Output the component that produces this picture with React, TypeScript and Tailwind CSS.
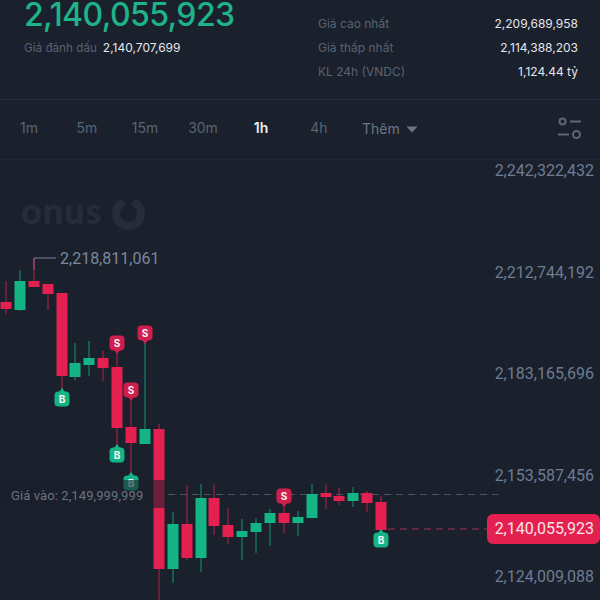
const UI_FONT = "font-['Inter','Liberation_Sans',sans-serif]";

const TIMEFRAMES = ["1m", "5m", "15m", "30m", "1h", "4h"];
const STATS = [
  { label: "Giá cao nhất", value: "2,209,689,958" },
  { label: "Giá thấp nhất", value: "2,114,388,203" },
  { label: "KL 24h (VNDC)", value: "1,124.44 tỷ" },
];
const AXIS = ["2,242,322,432", "2,212,744,192", "2,183,165,696", "2,153,587,456", "2,124,009,088"];

const RED = "#e3204f";
const GREEN = "#14b485";

// x, wick top, wick bottom, body top, body bottom, up
const CANDLES: [number, number, number, number, number, boolean][] = [
  [6, 281, 314, 302, 309, false],
  [20, 270, 311, 281, 310, true],
  [34, 258, 287, 281, 287, false],
  [48, 284, 310, 284, 294, false],
  [62, 293, 392, 293, 376, false],
  [75, 343, 380, 363, 377, true],
  [89, 341, 376, 358, 365, true],
  [103, 351, 381, 358, 368, false],
  [117, 348, 448, 367, 428, false],
  [131, 396, 476, 427, 443, false],
  [145, 340, 429, 429, 444, true],
  [159, 424, 600, 429, 569, false],
  [173, 512, 583, 524, 569, true],
  [187, 485, 560, 524, 558, false],
  [201, 484, 572, 498, 558, true],
  [214, 484, 535, 498, 526, false],
  [228, 508, 544, 525, 537, false],
  [242, 519, 560, 531, 537, true],
  [256, 518, 553, 523, 532, true],
  [270, 509, 546, 513, 523, true],
  [284, 503, 533, 513, 523, false],
  [298, 511, 536, 517, 523, true],
  [312, 484, 518, 494, 518, true],
  [326, 484, 509, 493, 497, false],
  [339, 488, 505, 496, 501, false],
  [353, 487, 507, 493, 501, true],
  [367, 491, 512, 493, 503, false],
  [381, 496, 532, 502, 530, false],
];

// x, center y, letter, points up
const MARKERS: [number, number, string, boolean][] = [
  [62, 399, "B", true],
  [117, 343, "S", false],
  [117, 455, "B", true],
  [131, 390, "S", false],
  [131, 483, "B", true],
  [145, 333, "S", false],
  [284, 496, "S", false],
  [381, 540, "B", true],
];

function Marker({ x, y, letter, up }: { x: number; y: number; letter: string; up: boolean }) {
  const fill = letter === "B" ? GREEN : "#d01f4e";
  const tip = up ? y - 11 : y + 11;
  const base = up ? y - 7 : y + 7;
  return (
    <g>
      <path d={`M${x - 3} ${base}L${x} ${tip}L${x + 3} ${base}Z`} fill={fill} />
      <rect x={x - 7.5} y={y - 7.5} width={15} height={15} rx={4} fill={fill} />
      <text x={x} y={y + 3.5} textAnchor="middle" fontSize={10} fontWeight={700} fill="#f4f6f8" fontFamily="Inter, sans-serif">
        {letter}
      </text>
    </g>
  );
}

function ChartDrawing() {
  return (
    <svg className="absolute inset-0 h-full w-full" viewBox="0 160 600 440">
      {[118, 240, 360, 480].map((x) => (
        <line key={x} x1={x} y1={160} x2={x} y2={600} stroke="#1e2432" />
      ))}
      {[178, 279, 381, 482, 584].map((y) => (
        <line key={y} x1={0} y1={y} x2={600} y2={y} stroke="#1d2330" />
      ))}

      {/* watermark */}
      <circle cx={128.5} cy={213.5} r={12.5} fill="none" stroke="#252d3c" strokeWidth={8} />
      <path d="M120 196L128.5 208L137 196Z" fill="#1a202c" />

      <path d="M34 270V258H56" fill="none" stroke="#77849a" strokeWidth={1} />

      <line x1={168} y1={494.5} x2={498} y2={494.5} stroke="#4b5361" strokeDasharray="7 5" />
      <line x1={388} y1={529} x2={488} y2={529} stroke="#a53057" strokeDasharray="7 5" />

      {CANDLES.map(([x, wt, wb, bt, bb, up]) => {
        const color = up ? GREEN : RED;
        return (
          <g key={x}>
            <line x1={x} y1={wt} x2={x} y2={wb} stroke={color} strokeOpacity={0.8} strokeWidth={1} />
            <rect x={x - 5.5} y={bt} width={11} height={bb - bt} fill={color} />
          </g>
        );
      })}

      {MARKERS.map(([x, y, letter, up]) => (
        <Marker key={`${x}-${y}`} x={x} y={y} letter={letter} up={up} />
      ))}

      {/* entry price label dims what sits under it */}
      <rect x={0} y={480} width={166} height={28} fill="#1a202c" fillOpacity={0.6} />
    </svg>
  );
}

export default function App() {
  return (
    <div className={`flex h-[600px] w-[600px] flex-col overflow-hidden bg-[#1a202c] ${UI_FONT}`}>
      <header className="flex h-[100px] shrink-0 justify-between border-b border-[#262e3e]">
        <div className="pl-6">
          <div className="text-[32px] leading-[30px] font-medium tracking-[-0.6px] text-[#1eb389]">2,140,055,923</div>
          <div className="mt-[8px] flex items-center gap-[6px] text-xs leading-5">
            <span className="text-[11.7px] text-[#596373]">Giá đánh dấu</span>
            <span className="text-[#e3e6ea]">2,140,707,699</span>
          </div>
        </div>
        <div className="mt-[14px] flex w-[282px] flex-col gap-1 pr-[22px] pb-2 text-xs leading-5">
          {STATS.map((s) => (
            <div key={s.label} className="flex justify-between">
              <span className="text-[#596373]">{s.label}</span>
              <span className="text-[#e3e6ea]">{s.value}</span>
            </div>
          ))}
        </div>
      </header>

      <nav className="flex h-[60px] shrink-0 items-center border-b border-[#212836] pb-[3px] text-sm text-[#596373]">
        {TIMEFRAMES.map((t) => (
          <span key={t} className={`w-[58px] text-center ${t === "1h" ? "font-semibold text-[#eceef1]" : ""}`}>
            {t}
          </span>
        ))}
        <span className="mt-[2px] ml-[14px] flex items-center gap-[6px] text-[#6a7585]">
          Thêm
          <svg width="12" height="7" viewBox="0 0 12 7">
            <path d="M0.5 0.5H11.5L6 6.5Z" fill="#6a7585" />
          </svg>
        </span>
        <svg className="mr-[19px] ml-auto" width="23" height="23" viewBox="0 0 23 23" fill="none" stroke="#5b6676" strokeWidth="2">
          <circle cx="4.5" cy="4.5" r="3" />
          <path d="M12 4.5H23" />
          <path d="M0 17.5H11" />
          <circle cx="18.5" cy="17.5" r="3.5" />
        </svg>
      </nav>

      <main className="relative flex-1 overflow-hidden">
        <ChartDrawing />
        <span className="absolute top-[30px] left-[21px] font-['Lato',sans-serif] text-[36px] leading-10 font-black tracking-[1px] text-[#252d3c]">
          onus
        </span>
        <span className="absolute top-[89px] left-[60px] font-['Roboto',sans-serif] text-base leading-5 text-[#7b889c]">
          2,218,811,061
        </span>
        <span className="absolute top-[327px] left-[11px] font-['Roboto',sans-serif] text-[13px] leading-[18px] tracking-[0.1px] text-[#6a7382]">
          Giá vào: 2,149,999,999
        </span>
        <div className="absolute top-[1px] right-[6px] flex flex-col gap-[81.5px] text-right font-['Roboto',sans-serif] text-base leading-5 text-[#6d7c92]">
          {AXIS.map((v) => (
            <span key={v}>{v}</span>
          ))}
        </div>
        <div className="absolute top-[354px] right-0 rounded-l-md rounded-r-md bg-[#e3204f] py-[5px] pr-[6px] pl-[8px] font-['Roboto',sans-serif] text-base leading-5 text-[#fbe3e8]">
          2,140,055,923
        </div>
      </main>
    </div>
  );
}
